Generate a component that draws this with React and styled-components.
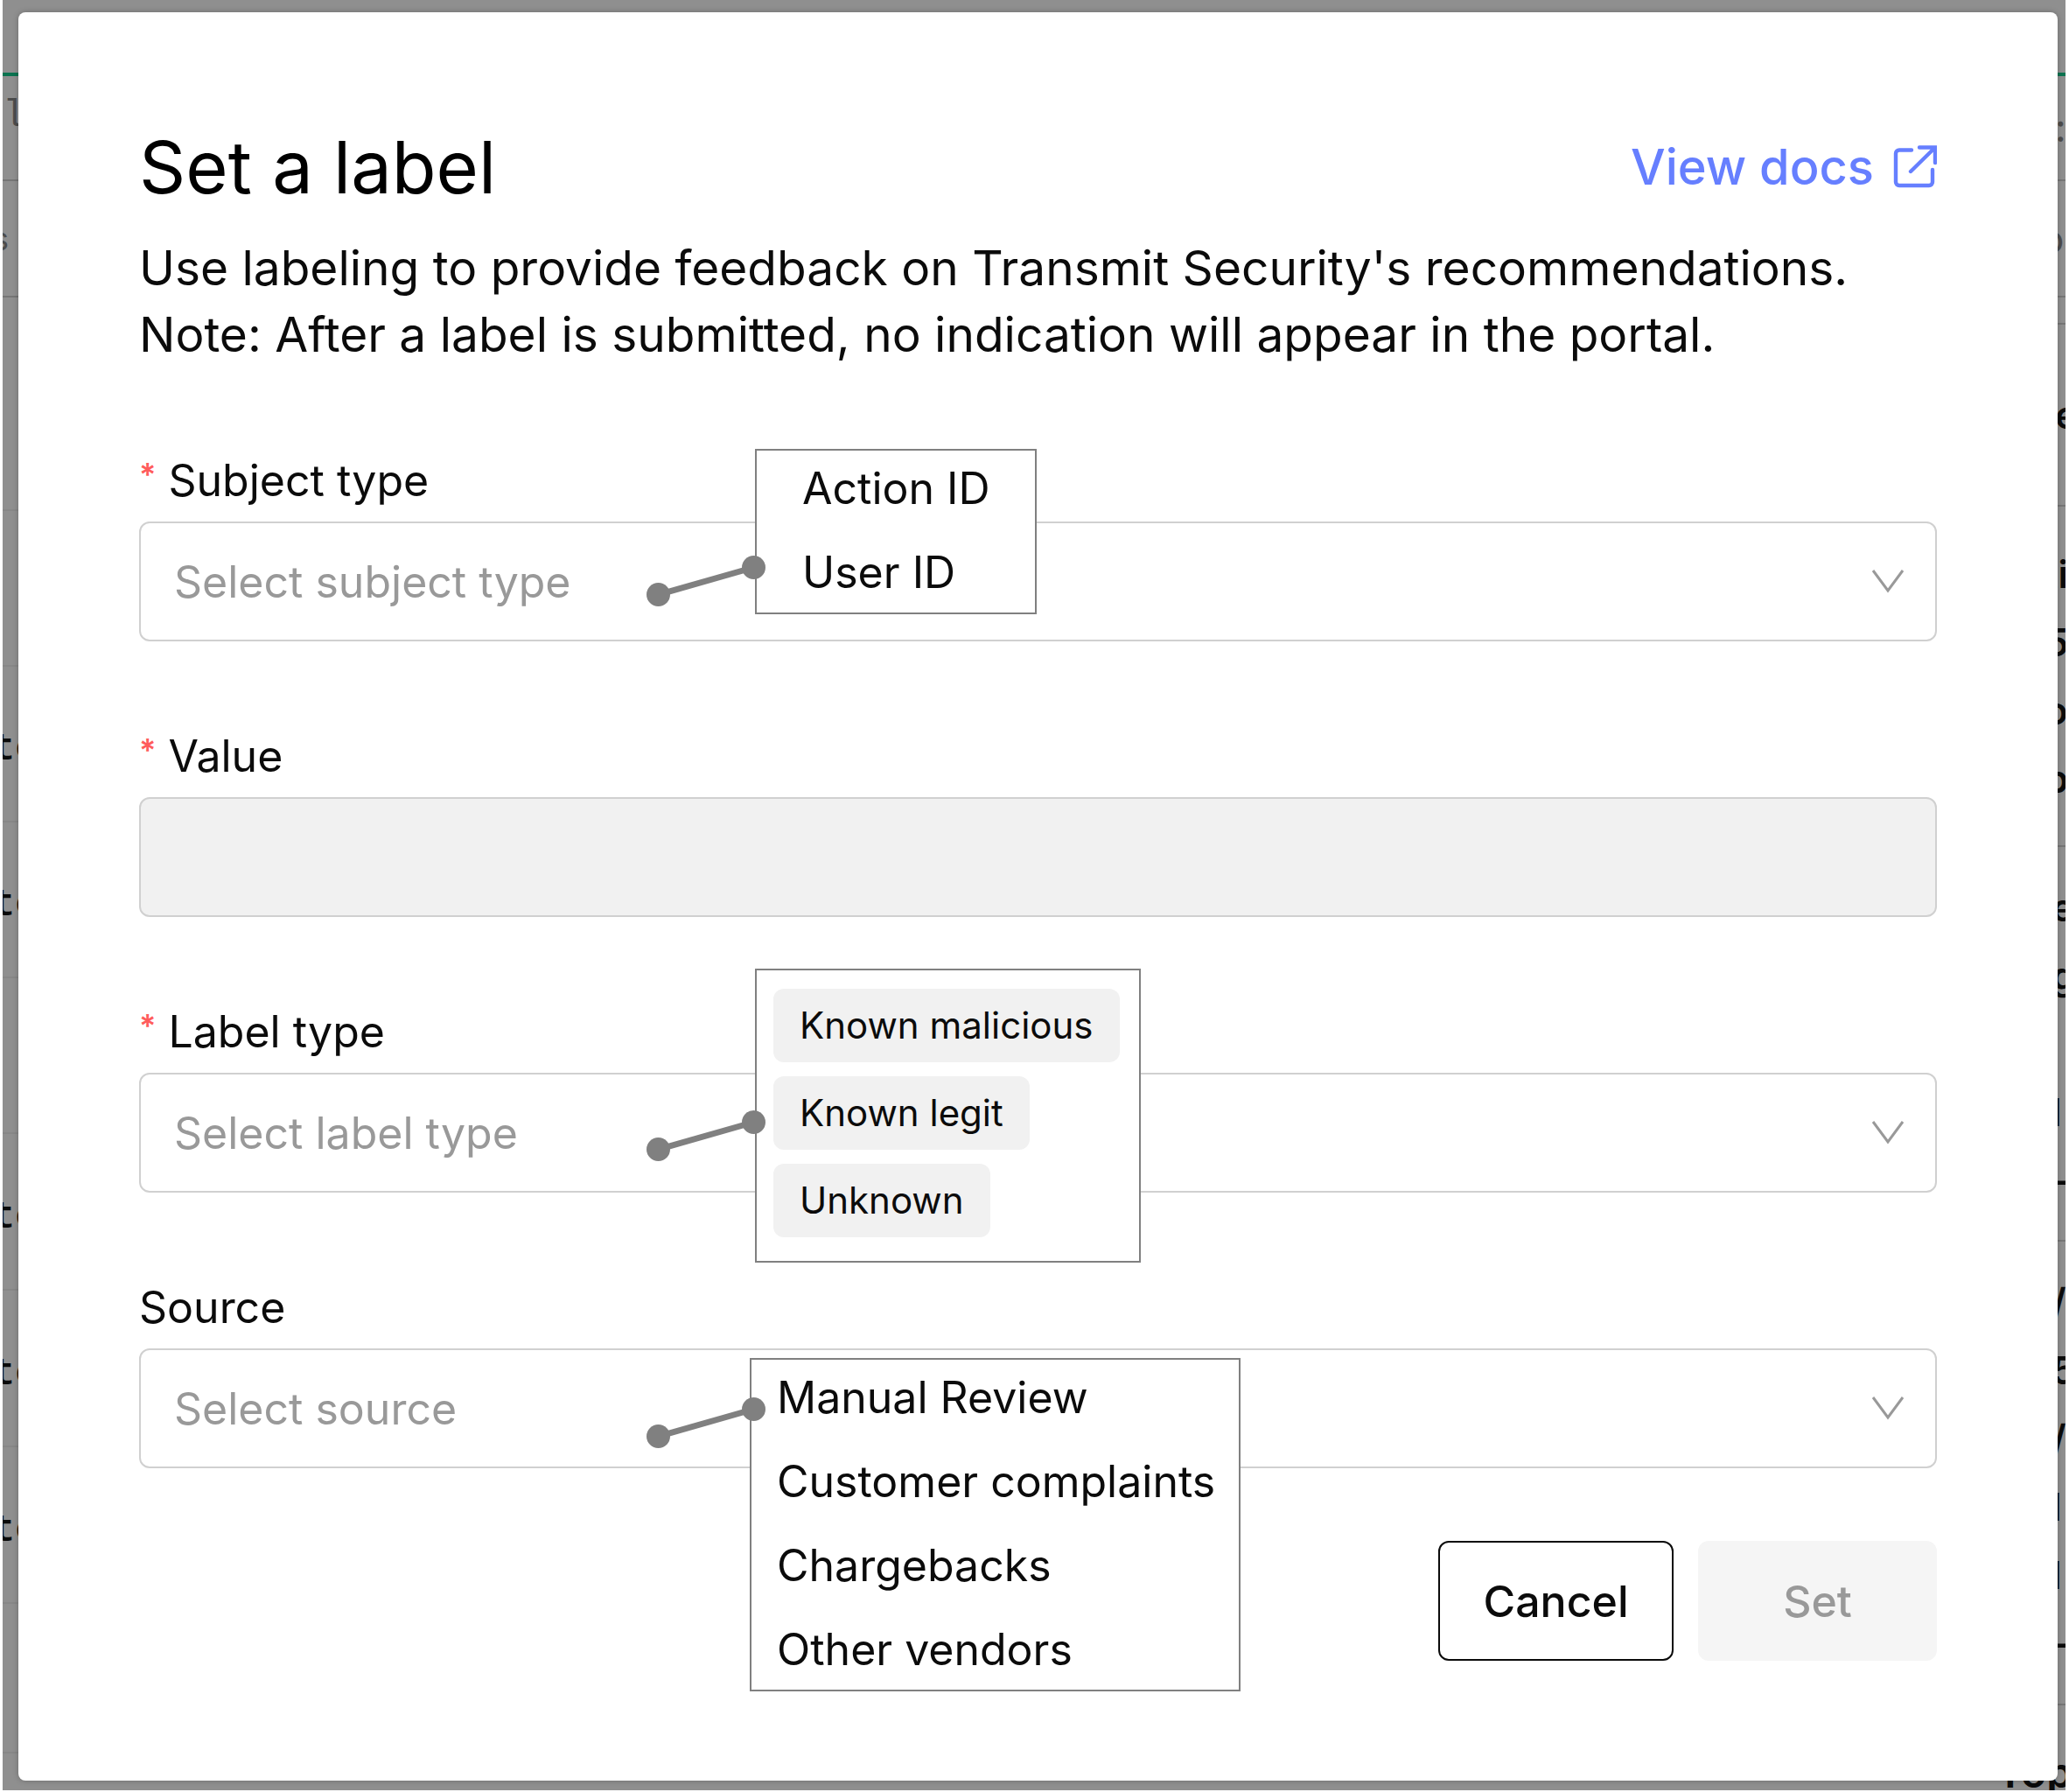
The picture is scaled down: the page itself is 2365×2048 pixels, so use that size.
import React from "react";
import styled, { createGlobalStyle } from "styled-components";

const sans = `Inter, "Liberation Sans", sans-serif`;
const mono = `"Liberation Mono", monospace`;

const GlobalStyle = createGlobalStyle`
  *, *::before, *::after { box-sizing: border-box; }
  body { margin: 0; background: #fff; color: #0b0b0b; font-family: ${sans}; }
`;

const Page = styled.div`
  display: grid;
  min-height: 100vh;
  padding: 0 4px 2px 3px;
`;

/* Dimmed page behind the dialog */
const Behind = styled.div`
  grid-area: 1 / 1;
  display: flex;
  justify-content: space-between;
  height: 0;
  min-height: 100%;
  overflow: hidden;
  background: #8f8f8f;
`;

const Column = styled.div`
  width: ${(p) => (p.$side === "right" ? "194px" : "120px")};
  overflow: hidden;
`;

const Cell = styled.div`
  display: flex;
  flex-direction: column;
  justify-content: ${(p) => (p.$top ? "flex-start" : "center")};
  height: ${(p) => p.$height}px;
  padding-top: ${(p) => p.$drop || 0}px;
  padding-left: ${(p) => p.$indent || 0}px;
  border-bottom: ${(p) => (p.$green ? "4px solid #0b7350" : `2px solid ${p.$faint ? "#878787" : "#767676"}`)};
`;

const Line = styled.span`
  display: block;
  margin-left: ${(p) => (p.$cut ? "-12px" : "0")};
  font-family: ${(p) => (p.$mono ? mono : sans)};
  font-size: ${(p) => (p.$small ? "36px" : "44px")};
  font-weight: ${(p) => (p.$soft ? 400 : 600)};
  line-height: 78px;
  white-space: nowrap;
  color: ${(p) => (p.$soft ? "#4c4c4c" : "#0b0b0b")};
`;

const Dialog = styled.section`
  grid-area: 1 / 1;
  position: relative;
  align-self: start;
  margin: 14px 9px 11px 18px;
  padding: 127px 138px 137px;
  border-radius: 8px;
  background: #fff;
  box-shadow: 0 0 6px rgba(0, 0, 0, 0.25);
`;

const Header = styled.header`
  display: flex;
  align-items: center;
  justify-content: space-between;
`;

const Title = styled.h1`
  margin: 0;
  font-size: 83px;
  font-weight: 400;
  line-height: 100px;
  color: #000;
`;

const DocsLink = styled.a`
  display: flex;
  align-items: center;
  gap: 22px;
  font-size: 56px;
  font-weight: 500;
  line-height: 76px;
  color: #667fff;
  text-decoration: none;
`;

const Intro = styled.p`
  margin: 27px 0 100px;
  font-size: 55px;
  line-height: 76px;
`;

const Form = styled.form`
  display: flex;
  flex-direction: column;
`;

const Fields = styled.div`
  display: flex;
  flex-direction: column;
  gap: 102px;
`;

const Field = styled.div`
  display: flex;
  flex-direction: column;
  gap: 18px;
`;

const Label = styled.label`
  display: flex;
  gap: 14px;
  font-size: 50px;
  line-height: 58px;
`;

const Required = styled.span`
  font-size: 36px;
  font-weight: 600;
  line-height: 44px;
  color: #ff5c5c;
`;

const Control = styled.div`
  position: relative;
  display: flex;
`;

const Select = styled.select`
  appearance: none;
  width: 100%;
  height: 137px;
  padding: 0 100px 0 38px;
  border: 2px solid #d0d0d0;
  border-radius: 12px;
  background: #fff;
  font: 400 50px ${sans};
  color: #999;
`;

const Input = styled.input`
  width: 100%;
  height: 137px;
  padding: 0 38px;
  border: 2px solid #d0d0d0;
  border-radius: 12px;
  background: #f1f1f1;
  font: 400 50px ${sans};
`;

const Arrow = styled.svg`
  position: absolute;
  right: 38px;
  top: 54px;
  pointer-events: none;
`;

const Callout = styled.ul`
  position: absolute;
  z-index: 1;
  left: ${(p) => p.$left}px;
  top: ${(p) => p.$top}px;
  width: ${(p) => p.$width}px;
  display: flex;
  flex-direction: column;
  align-items: flex-start;
  gap: ${(p) => (p.$chips ? 16 : 36)}px;
  margin: 0;
  padding: ${(p) => (p.$chips ? "21px 19px 27px" : `13px 0 16px ${p.$inset}px`)};
  border: 2px solid #808080;
  background: #fff;
  list-style: none;
`;

const Item = styled.li`
  font-size: 50px;
  line-height: 60px;
  white-space: nowrap;
`;

const Chip = styled.li`
  padding: 0 30px;
  border-radius: 12px;
  background: #f1f1f1;
  font-size: 42px;
  line-height: 84px;
  white-space: nowrap;
`;

const Pointer = styled.svg`
  position: absolute;
  z-index: 2;
  left: 580px;
  top: ${(p) => p.$top}px;
`;

const Actions = styled.footer`
  display: flex;
  justify-content: flex-end;
  gap: 28px;
  margin-top: 83px;
`;

const Button = styled.button`
  min-width: ${(p) => (p.$primary ? 273 : 269)}px;
  height: 137px;
  padding: 0 48px;
  border: 2px solid ${(p) => (p.$primary ? "#f5f5f5" : "#0b0b0b")};
  border-radius: 12px;
  background: ${(p) => (p.$primary ? "#f5f5f5" : "#fff")};
  font: 500 50px ${sans};
  color: ${(p) => (p.$primary ? "#999" : "#0b0b0b")};
`;

const leftCells = [
  { height: 87, green: true },
  { height: 120, text: "l", soft: true, top: true, drop: 6 },
  { height: 133, text: "s", soft: true, small: true },
  { height: 244, faint: true },
  { height: 178, faint: true },
  { height: 178, text: "te", faint: true, drop: 12 },
  { height: 178, text: "te", faint: true, drop: 12 },
  { height: 178, faint: true },
  { height: 179, text: "te", faint: true, drop: 12 },
  { height: 179, text: "te", faint: true, drop: 12 },
  { height: 179, text: "te", faint: true, drop: 12 },
  { height: 171, faint: true },
];

const rightCells = [
  { height: 87, green: true, lines: [] },
  { height: 120, lines: [":"], soft: true },
  { height: 133, lines: ["o"], soft: true, indent: 166 },
  { height: 31, lines: [] },
  { height: 208, lines: ["e"], indent: 182 },
  { height: 389, lines: ["ti", "5", "o", "p"], indent: 170 },
  { height: 451, lines: ["e", "g", "\u00a0", "l", "-"], indent: 178 },
  { height: 530, lines: ["/", "5", "/", "l", "l", "-"], indent: 178 },
];

const TopHeading = styled.span`
  display: block;
  padding-left: 115px;
  font-size: 48px;
  font-weight: 600;
  line-height: 154px;
`;

function ExternalIcon() {
  return (
    <svg width="50" height="50" viewBox="0 0 50 50" fill="none" stroke="currentColor" strokeWidth="4.4" aria-hidden="true">
      <path d="M21 5.500H7a4 4 0 0 0-4 4V42a4 4 0 0 0 4 4h34a4 4 0 0 0 4-4V28" strokeLinecap="round" />
      <path d="M30 2.500H48V20M47.500 3 20 30" strokeLinecap="round" />
    </svg>
  );
}

function DropArrow() {
  return (
    <Arrow width="38" height="30" viewBox="0 0 38 30" fill="none" stroke="#999" strokeWidth="3" aria-hidden="true">
      <path d="M3 2 20 25 37 2" />
    </Arrow>
  );
}

function PointerLine({ top }) {
  return (
    <Pointer $top={top} width="136" height="58" viewBox="0 0 136 58" fill="#808080" aria-hidden="true">
      <path d="M13.500 44.500 122.500 13.500" stroke="#808080" strokeWidth="7" />
      <circle cx="13.500" cy="44.500" r="13.500" />
      <circle cx="122.500" cy="13.500" r="13.500" />
    </Pointer>
  );
}

function SelectField({ id, label, placeholder, required, pointerTop, children }) {
  return (
    <Field>
      <Label htmlFor={id}>
        {required && <Required>*</Required>}
        {label}
      </Label>
      <Control>
        <Select id={id} defaultValue="">
          <option value="">{placeholder}</option>
        </Select>
        <DropArrow />
        {children}
        <PointerLine top={pointerTop} />
      </Control>
    </Field>
  );
}

export default function App() {
  return (
    <>
      <GlobalStyle />
      <Page>
        <Behind aria-hidden="true">
          <Column>
            {leftCells.map((c, i) => (
              <Cell key={i} $height={c.height} $green={c.green} $faint={c.faint} $top={c.top} $drop={c.drop}>
                {c.text && (
                  <Line $mono={c.text !== "s"} $cut={c.text !== "l"} $soft={c.soft} $small={c.small}>
                    {c.text}
                  </Line>
                )}
              </Cell>
            ))}
          </Column>
          <Column $side="right">
            {rightCells.map((c, i) => (
              <Cell key={i} $height={c.height} $green={c.green} $indent={c.indent || 182}>
                {c.lines.map((t, j) => (
                  <Line key={j} $soft={c.soft}>{t}</Line>
                ))}
              </Cell>
            ))}
            <TopHeading>Top</TopHeading>
          </Column>
        </Behind>

        <Dialog role="dialog" aria-labelledby="dialog-title">
          <Header>
            <Title id="dialog-title">Set a label</Title>
            <DocsLink href="#docs">
              View docs
              <ExternalIcon />
            </DocsLink>
          </Header>
          <Intro>
            Use labeling to provide feedback on Transmit Security's recommendations.
            <br />
            Note: After a label is submitted, no indication will appear in the portal.
          </Intro>
          <Form onSubmit={(e) => e.preventDefault()}>
            <Fields>
              <SelectField id="subject" label="Subject type" placeholder="Select subject type" required pointerTop={39}>
                <Callout $left={704} $top={-83} $width={322} $inset={52}>
                  <Item>Action ID</Item>
                  <Item>User ID</Item>
                </Callout>
              </SelectField>
              <Field>
                <Label htmlFor="value">
                  <Required>*</Required>
                  Value
                </Label>
                <Input id="value" type="text" disabled />
              </Field>
              <SelectField id="label-type" label="Label type" placeholder="Select label type" required pointerTop={43}>
                <Callout $left={704} $top={-119} $width={441} $chips>
                  <Chip>Known malicious</Chip>
                  <Chip>Known legit</Chip>
                  <Chip>Unknown</Chip>
                </Callout>
              </SelectField>
              <SelectField id="source" label="Source" placeholder="Select source" pointerTop={56}>
                <Callout $left={698} $top={11} $width={561} $inset={29}>
                  <Item>Manual Review</Item>
                  <Item>Customer complaints</Item>
                  <Item>Chargebacks</Item>
                  <Item>Other vendors</Item>
                </Callout>
              </SelectField>
            </Fields>
            <Actions>
              <Button type="button">Cancel</Button>
              <Button type="submit" $primary disabled>Set</Button>
            </Actions>
          </Form>
        </Dialog>
      </Page>
    </>
  );
}
